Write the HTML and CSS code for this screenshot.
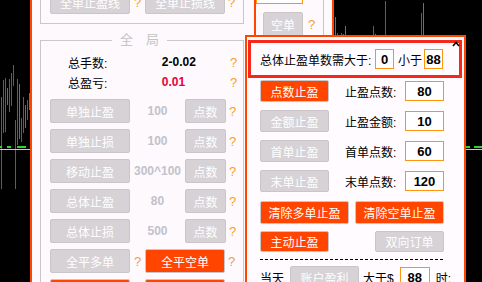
FILE: index.html
```html
<!DOCTYPE html>
<html lang="zh-CN">
<head>
  <meta charset="UTF-8" />
  <meta name="viewport" content="width=device-width, initial-scale=1.0" />
  <title>止盈设置</title>
  <link rel="stylesheet" href="styles.css">
</head>
<body>
  <div class="screen">
    <svg class="chart chart-left" viewBox="0 0 30 282">
      <g class="up">
        <rect x="1" y="97" width="1" height="92"/>
        <rect x="3" y="80" width="1" height="53"/>
        <rect x="5" y="78" width="1" height="54"/>
        <rect x="9" y="79" width="1" height="33"/>
        <rect x="11" y="73" width="1" height="33"/>
        <rect x="13" y="65" width="1" height="21"/>
        <rect x="15" y="120" width="1" height="69"/>
        <rect x="17" y="79" width="1" height="66"/>
        <rect x="21" y="118" width="1" height="24"/>
        <rect x="23" y="97" width="1" height="36"/>
        <rect x="27" y="100" width="1" height="20"/>
      </g>
      <g class="down">
        <rect x="7" y="88" width="1" height="17"/>
        <rect x="19" y="84" width="1" height="55"/>
        <rect x="25" y="105" width="1" height="23"/>
        <rect x="29" y="93" width="1" height="17"/>
      </g>
      <g class="level">
        <rect x="0" y="146" width="2" height="2"/>
        <rect x="7" y="146" width="4" height="2"/>
        <rect x="17" y="146" width="9" height="2"/>
      </g>
      <rect class="price" x="0" y="149" width="30" height="1"/>
    </svg>

    <div class="panel-main">
      <div class="box top-box">
        <div class="row">
          <span class="btn gray wide">全单止盈线</span><span class="help mid">?</span>
          <span class="btn gray wide">全单止损线</span><span class="help">?</span>
        </div>
      </div>

      <fieldset class="box global">
        <legend>全&emsp;局</legend>
        <div class="stat"><span class="stat-label">总手数:</span><span class="stat-val">2-0.02</span><span class="help">?</span></div>
        <div class="stat"><span class="stat-label">总盈亏:</span><span class="stat-val red">0.01</span><span class="help">?</span></div>

        <div class="rows">
          <div class="row">
            <span class="btn gray wide">单独止盈</span><span class="val">100</span><span class="btn gray small">点数</span><span class="help">?</span>
          </div>
          <div class="row">
            <span class="btn gray wide">单独止损</span><span class="val">100</span><span class="btn gray small">点数</span><span class="help">?</span>
          </div>
          <div class="row">
            <span class="btn gray wide">移动止盈</span><span class="val">300^100</span><span class="btn gray small">点数</span><span class="help">?</span>
          </div>
          <div class="row">
            <span class="btn gray wide">总体止盈</span><span class="val">80</span><span class="btn gray small">点数</span><span class="help">?</span>
          </div>
          <div class="row">
            <span class="btn gray wide">总体止损</span><span class="val">500</span><span class="btn gray small">点数</span><span class="help">?</span>
          </div>
          <div class="row">
            <span class="btn gray wide">全平多单</span><span class="help mid">?</span>
            <span class="btn orange wide">全平空单</span><span class="help">?</span>
          </div>
          <div class="row">
            <span class="btn orange wide">全平止盈</span><span class="help mid">?</span>
            <span class="btn orange wide">全平止损</span><span class="help">?</span>
          </div>
        </div>
      </fieldset>
    </div>

    <div class="panel-side">
      <div class="side-box">
        <div class="field side-field">88</div>
        <div class="row side-row">
          <span class="btn gray small">空单</span><span class="help">?</span>
        </div>
      </div>
    </div>

    <svg class="chart chart-right" viewBox="0 0 148 282">
      <g class="up">
        <rect x="3" y="33" width="1" height="30"/>
        <rect x="7" y="33" width="1" height="30"/>
        <rect x="9" y="34" width="1" height="30"/>
        <rect x="39" y="26" width="1" height="30"/>
        <rect x="51" y="1" width="1" height="60"/>
        <rect x="87" y="13" width="1" height="50"/>
      </g>
      <g class="down">
        <rect x="1" y="17" width="1" height="40"/>
        <rect x="11" y="26" width="1" height="30"/>
        <rect x="41" y="34" width="1" height="20"/>
        <rect x="89" y="3" width="1" height="60"/>
      </g>
      <g class="level">
        <rect x="132" y="146" width="4" height="2"/>
        <rect x="140" y="146" width="8" height="2"/>
      </g>
      <rect class="price" x="130" y="149" width="18" height="1"/>
    </svg>
  </div>

  <div class="popup">
    <svg class="caret" viewBox="0 0 8 6"><path d="M1 5 L4 1.5 L7 5" /></svg>
    <div class="limit-box">
      <span class="limit-label">总体止盈单数需大于:</span>
      <span class="field tiny">0</span>
      <span class="limit-mid">小于</span>
      <span class="field tiny">88</span>
    </div>

    <div class="popup-body">
      <div class="prow">
        <span class="btn orange pbtn">点数止盈</span><span class="plabel">止盈点数:</span><span class="field pfield">80</span>
      </div>
      <div class="prow">
        <span class="btn gray pbtn">金额止盈</span><span class="plabel">止盈金额:</span><span class="field pfield">10</span>
      </div>
      <div class="prow">
        <span class="btn gray pbtn">首单止盈</span><span class="plabel">首单点数:</span><span class="field pfield">60</span>
      </div>
      <div class="prow">
        <span class="btn gray pbtn">末单止盈</span><span class="plabel">末单点数:</span><span class="field pfield">120</span>
      </div>

      <div class="prow clear-row">
        <span class="btn orange cbtn">清除多单止盈</span>
        <span class="btn orange cbtn">清除空单止盈</span>
      </div>
      <div class="prow split">
        <span class="btn orange pbtn">主动止盈</span>
        <span class="btn gray pbtn">双向订单</span>
      </div>

      <div class="dashes"></div>

      <div class="prow day-row">
        <span>当天</span>
        <span class="btn gray pbtn day-btn">账户盈利</span>
        <span class="day-gt">大于$</span>
        <span class="field day-field">88</span>
        <span class="day-when">时:</span>
      </div>
    </div>
  </div>
</body>
</html>
```

FILE: styles.css
```css
* {
  box-sizing: border-box;
}
html, body {
  margin: 0;
  height: 100%;
}
body {
  background: #000;
  font-family: "Liberation Sans", "Noto Sans CJK SC", sans-serif;
  font-size: 12px;
  color: #000;
  overflow: hidden;
  position: relative;
}
.screen {
  display: flex;
  height: 282px;
}

/* charts */
.chart {
  display: block;
  flex: none;
  height: 282px;
}
.chart-left {
  width: 30px;
}
.chart-right {
  width: 148px;
}
.up rect {
  fill: #dc1f55;
}
.down rect {
  fill: #2f9a2f;
}
.level rect {
  fill: #2ed12e;
}
.price {
  fill: #c8c8c8;
}

/* shared bits */
.row {
  display: flex;
  align-items: center;
}
.btn {
  display: flex;
  align-items: center;
  justify-content: center;
  flex: none;
  height: 24px;
  border: 1px solid #c9c5c9;
  border-radius: 2px;
  color: #fff;
  white-space: nowrap;
}
.btn.gray {
  background: #d6d2d6;
}
.btn.orange {
  background: #ff4500;
}
.btn.wide {
  width: 80px;
}
.btn.small {
  width: 41px;
}
.help {
  flex: none;
  width: 16px;
  padding-left: 3px;
  color: #f5a030;
  font-size: 13px;
}
.help.mid {
  width: 15px;
  padding-left: 4px;
}
.field {
  display: flex;
  align-items: center;
  justify-content: center;
  flex: none;
  height: 20px;
  border: 1px solid #ff9410;
  background: #fff;
  font-weight: bold;
  font-size: 13px;
}

/* main panel */
.panel-main {
  flex: none;
  width: 224px;
  border-left: 2px solid #ff4500;
  background: #fdf9fd;
  padding-left: 8px;
}
.box {
  width: 204px;
  border: 1px solid #c8c8c8;
}
.top-box {
  margin-top: -16px;
  padding: 5px 0 9px 9px;
}
.global {
  margin: 8px 0 0;
  padding: 4px 0 0 9px;
  min-width: 0;
  height: 300px;
}
.global legend {
  margin-left: 62px;
  padding: 0 8px;
  color: #c4c4c4;
  font-size: 13px;
  line-height: 16px;
}
.stat {
  display: flex;
  align-items: center;
  height: 20px;
  padding-left: 18px;
}
.stat-label {
  width: 95px;
}
.stat-val {
  width: 66px;
  font-weight: bold;
}
.stat-val.red {
  color: #e6003c;
}
.rows {
  display: flex;
  flex-direction: column;
  gap: 6px;
  margin-top: 7px;
}
.val {
  width: 55px;
  text-align: center;
  color: #c2c2ca;
  font-weight: bold;
  white-space: nowrap;
}

/* second panel */
.panel-side {
  flex: none;
  width: 80px;
  border-left: 2px solid #ff4500;
  border-right: 2px solid #ff4500;
  background: #fdf9fd;
}
.side-box {
  width: 68px;
  height: 100%;
  border-right: 1px solid #c8c8c8;
}
.side-field {
  width: 47px;
  margin-top: -16px;
  justify-content: flex-start;
  padding-left: 1px;
}
.side-row {
  margin-top: 8px;
  padding-left: 7px;
}
.side-row .btn.small {
  width: 40px;
}
.side-row .help {
  padding-left: 5px;
}

/* popup */
.popup {
  position: absolute;
  left: 245px;
  top: 35px;
  width: 221px;
  height: 260px;
  border: 2px solid #ff4500;
  background: #fffbfe;
  padding: 3px 0 0 1px;
}
.caret {
  position: absolute;
  left: 205px;
  top: 4px;
  width: 8px;
  height: 6px;
  fill: none;
  stroke: #000;
  stroke-width: 1.6;
}
.limit-box {
  display: flex;
  align-items: center;
  width: 214px;
  height: 38px;
  border: 3px solid #f5281c;
  padding-left: 9px;
}
.limit-label {
  width: 115px;
  white-space: nowrap;
}
.field.tiny {
  width: 19px;
}
.limit-mid {
  width: 27px;
  padding-left: 4px;
  white-space: nowrap;
}
.limit-mid + .field {
  margin-left: 3px;
}
.popup-body {
  padding: 2px 0 0 12px;
  width: 197px;
}
.prow {
  display: flex;
  align-items: center;
  margin-bottom: 8px;
}
.btn.pbtn {
  width: 69px;
  height: 22px;
}
.plabel {
  width: 60px;
  margin-left: 16px;
  white-space: nowrap;
}
.field.pfield {
  width: 39px;
}
.clear-row {
  gap: 6px;
  margin-top: 9px;
  margin-bottom: 7px;
}
.btn.cbtn {
  width: 89px;
  height: 23px;
}
.split {
  justify-content: space-between;
  width: 184px;
  margin-bottom: 7px;
}
.split .btn.pbtn {
  height: 21px;
}
.dashes {
  width: 184px;
  height: 1px;
  background: repeating-linear-gradient(to right, #000 0 3px, transparent 3px 5px);
  margin-bottom: 6px;
}
.day-row {
  white-space: nowrap;
}
.day-btn {
  margin-left: 6px;
}
.day-gt {
  margin-left: 4px;
}
.field.day-field {
  width: 30px;
  margin-left: 6px;
}
.day-when {
  margin-left: 6px;
}
```
